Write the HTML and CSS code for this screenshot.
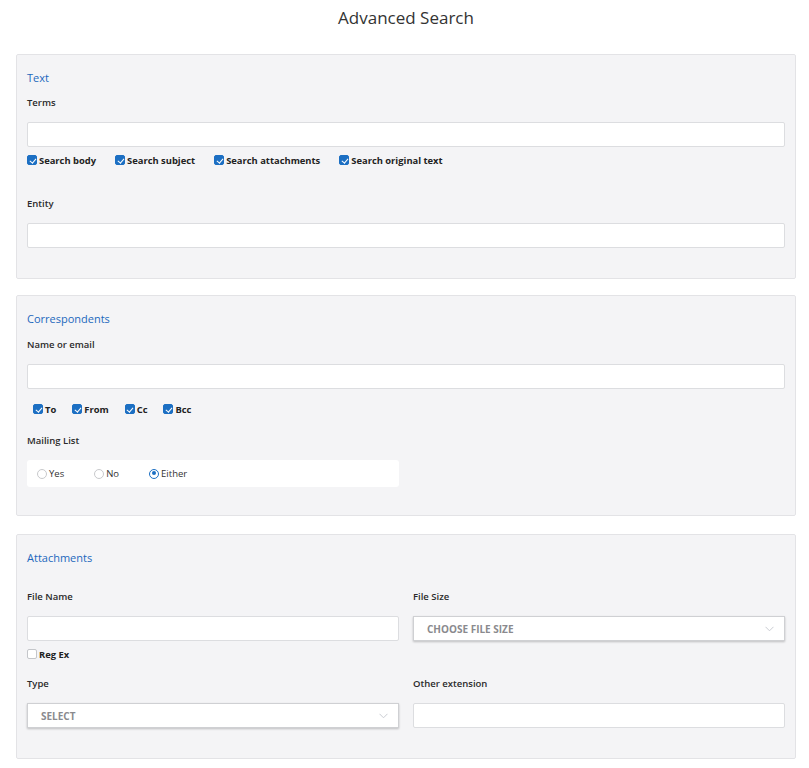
FILE: index.html
```html
<!DOCTYPE html>
<html>
<head>
<meta charset="utf-8">
<link rel="stylesheet" href="styles.css">
</head>
<body>
<h1 class="title">Advanced Search</h1>

<section class="panel p1">
  <h2 class="panel-heading">Text</h2>
  <div class="label first">Terms</div>
  <div class="input"></div>
  <div class="checks">
    <span class="check"><span class="box on"></span>Search body</span>
    <span class="check"><span class="box on"></span>Search subject</span>
    <span class="check"><span class="box on"></span>Search attachments</span>
    <span class="check"><span class="box on"></span>Search original text</span>
  </div>
  <div class="label spaced">Entity</div>
  <div class="input"></div>
</section>

<section class="panel p2">
  <h2 class="panel-heading">Correspondents</h2>
  <div class="label first">Name or email</div>
  <div class="input"></div>
  <div class="checks indent">
    <span class="check"><span class="box on"></span>To</span>
    <span class="check"><span class="box on"></span>From</span>
    <span class="check"><span class="box on"></span>Cc</span>
    <span class="check"><span class="box on"></span>Bcc</span>
  </div>
  <div class="label ml">Mailing List</div>
  <div class="radios">
    <span class="radio"><span class="circle"></span>Yes</span>
    <span class="radio"><span class="circle"></span>No</span>
    <span class="radio"><span class="circle sel"></span>Either</span>
  </div>
</section>

<section class="panel p3">
  <h2 class="panel-heading">Attachments</h2>
  <div class="cols">
    <div class="col">
      <div class="label att">File Name</div>
      <div class="input"></div>
      <div class="checks single">
        <span class="check"><span class="box"></span>Reg Ex</span>
      </div>
      <div class="label type">Type</div>
      <div class="select"><span>SELECT</span><svg class="chev" width="9" height="6" viewBox="0 0 9 6"><path d="M0.5 0.8 L4.5 4.8 L8.5 0.8" fill="none" stroke="#c9ccd2" stroke-width="1"/></svg></div>
    </div>
    <div class="col">
      <div class="label att">File Size</div>
      <div class="select"><span>CHOOSE FILE SIZE</span><svg class="chev" width="9" height="6" viewBox="0 0 9 6"><path d="M0.5 0.8 L4.5 4.8 L8.5 0.8" fill="none" stroke="#c9ccd2" stroke-width="1"/></svg></div>
      <div class="label type2">Other extension</div>
      <div class="input"></div>
    </div>
  </div>
</section>
</body>
</html>
```

FILE: styles.css
```css
* { box-sizing: border-box; }
body {
  margin: 0 13px 0 16px;
  font-family: "Open Sans", "Noto Sans", sans-serif;
  color: #333;
  background: #fff;
}
.title {
  margin: 0;
  padding-top: 6px;
  height: 54px;
  font-size: 17px;
  line-height: 24px;
  font-weight: 400;
  text-align: center;
  color: #333;
}
.panel {
  background: #f4f4f6;
  border: 1px solid #e3e3e6;
  border-radius: 2px;
  padding: 14px 10px 30px 10px;
}
.p2 { margin-top: 16px; padding-bottom: 28px; }
.p3 { margin-top: 18px; padding-bottom: 30px; }
.panel-heading {
  margin: 0;
  font-size: 11px;
  line-height: 18px;
  font-weight: 400;
  color: #1c68bd;
}
.label {
  font-size: 9.5px;
  line-height: 14px;
  font-weight: 600;
  color: #2b2b2b;
  margin-bottom: 12px;
}
.label.first { margin-top: 9px; }
.p2 .label.first { margin-top: 10px; }
.label.spaced { margin-top: 30px; }
.label.ml { margin-top: 18px; }
.label.att { margin-top: 23px; }
.label.type { margin-top: 16px; }
.label.type2 { margin-top: 36px; }
.input {
  height: 25px;
  background: #fff;
  border: 1px solid #dcdde0;
  border-radius: 2px;
}
.checks {
  display: flex;
  gap: 19px;
  margin-top: 6px;
  height: 14px;
  align-items: center;
}
.checks.indent { margin-top: 13px; padding-left: 6px; gap: 16px; }
.check {
  display: inline-flex;
  align-items: center;
  font-size: 9.4px;
  font-weight: 700;
  color: #222;
}
.box {
  width: 10px;
  height: 10px;
  border-radius: 2px;
  border: 1px solid #c4c6ca;
  background: #fff;
  margin-right: 2px;
  position: relative;
}
.box.on {
  background: #1c6fc3;
  border-color: #1c6fc3;
}
.box.on::after {
  content: "";
  position: absolute;
  left: 2.5px;
  top: 0.5px;
  width: 2.5px;
  height: 5px;
  border: solid #fff;
  border-width: 0 1.6px 1.6px 0;
  transform: rotate(40deg);
}
.radios {
  height: 27px;
  width: 372px;
  background: #fff;
  border-radius: 3px;
  display: flex;
  align-items: center;
  padding-left: 10px;
  gap: 30px;
}
.radio {
  display: inline-flex;
  align-items: center;
  font-size: 9.5px;
  color: #333;
}
.circle {
  width: 10px;
  height: 10px;
  border-radius: 50%;
  border: 1px solid #c8c9cc;
  margin-right: 2px;
  background: #fff;
  position: relative;
}
.circle.sel { border: 1.5px solid #1c6fc3; }
.circle.sel::after {
  content: "";
  position: absolute;
  left: 1.5px;
  top: 1.5px;
  width: 4px;
  height: 4px;
  border-radius: 50%;
  background: #1c6fc3;
}
.cols {
  display: grid;
  grid-template-columns: 372px 372px;
  column-gap: 14px;
}
.checks.single { margin-top: 6px; }
.select {
  height: 25px;
  background: #fff;
  border: 1px solid #cfd0d3;
  box-shadow: 0 1px 2px rgba(0,0,0,0.22);
  display: flex;
  align-items: center;
  justify-content: space-between;
  padding: 0 10px 0 13px;
  font-size: 10px;
  font-weight: 700;
  color: #8a8a8e;
}
.chev { display: block; }
```
